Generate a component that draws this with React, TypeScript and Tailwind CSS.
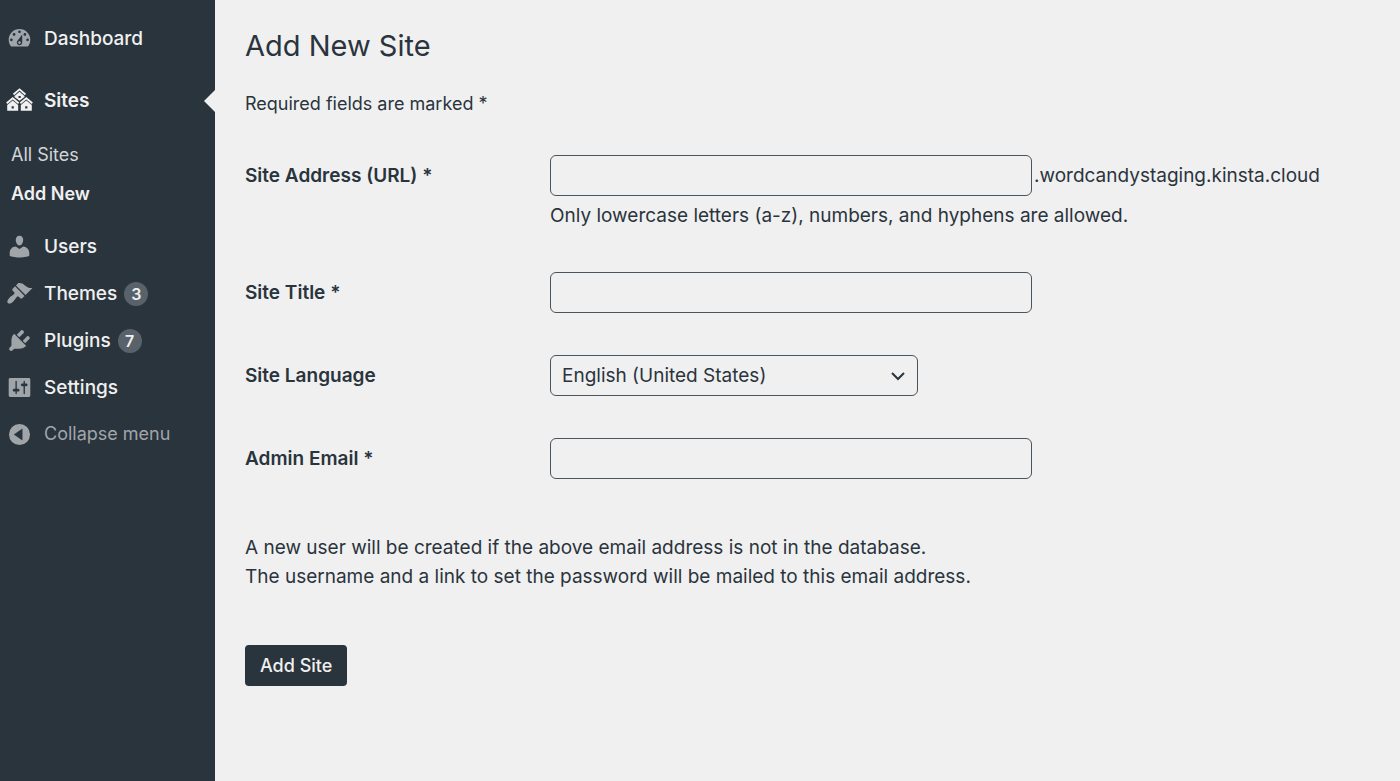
import type { ReactNode } from "react";

const icons = {
  dashboard:
    "M3.76 16h12.48c1.1-1.37 1.76-3.11 1.76-5 0-4.42-3.58-8-8-8s-8 3.58-8 8c0 1.89.66 3.63 1.76 5zM10 4c.55 0 1 .45 1 1s-.45 1-1 1-1-.45-1-1 .45-1 1-1zM6 6c.55 0 1 .45 1 1s-.45 1-1 1-1-.45-1-1 .45-1 1-1zm8 0c.55 0 1 .45 1 1s-.45 1-1 1-1-.45-1-1 .45-1 1-1zm-5.37 5.55L12 7v6c0 1.1-.9 2-2 2s-2-.9-2-2c0-.57.24-1.08.63-1.45zM4 10c.55 0 1 .45 1 1s-.45 1-1 1-1-.45-1-1 .45-1 1-1zm12 0c.55 0 1 .45 1 1s-.45 1-1 1-1-.45-1-1 .45-1 1-1zm-5 3c0-.55-.45-1-1-1s-1 .45-1 1 .45 1 1 1 1-.45 1-1z",
  users:
    "M10 9.25c-2.27 0-2.73-3.44-2.73-3.44C7 4.02 7.82 2 9.97 2c2.16 0 2.98 2.02 2.71 3.81 0 0-.41 3.44-2.68 3.44zm0 2.57L12.72 10c2.39 0 4.52 2.33 4.52 4.53v2.49s-3.65 1.13-7.24 1.13c-3.65 0-7.24-1.13-7.24-1.13v-2.49c0-2.25 1.94-4.48 4.47-4.48z",
  themes:
    "M14.48 11.06L7.41 3.99l1.5-1.5c.5-.56 2.3-.47 3.51.32 1.21.8 1.43 1.28 2.91 2.1 1.18.64 2.45 1.26 4.45.85zm-.71.71L6.7 4.7 4.93 6.47c-.39.39-.39 1.02 0 1.41l1.06 1.06c.39.39.39 1.03 0 1.42-.6.6-1.43 1.11-2.21 1.69-.35.26-.7.53-1.01.84C1.43 14.23.4 16.08 1.4 17.07c.99 1 2.84-.03 4.18-1.36.31-.31.58-.66.85-1.02.57-.78 1.08-1.61 1.69-2.21.39-.39 1.02-.39 1.41 0l1.06 1.06c.39.39 1.02.39 1.41 0z",
  plugins:
    "M13.11 4.36L9.87 7.6 8 5.73l3.24-3.24c.35-.34 1.05-.2 1.56.32.52.51.66 1.21.31 1.55zm-8 1.77l.91-1.12 9.01 9.01-1.19.84c-.71.71-2.63 1.16-3.82 1.16H6.14L4.9 17.26c-.59.59-1.54.59-2.12 0-.59-.58-.59-1.53 0-2.12l1.24-1.24v-3.88c0-1.13.4-3.19 1.09-3.89zm7.26 3.97l3.24-3.24c.34-.35 1.04-.21 1.55.31.52.51.66 1.21.31 1.55l-3.24 3.25z",
  settings:
    "M18 16V4c0-.55-.45-1-1-1H3c-.55 0-1 .45-1 1v12c0 .55.45 1 1 1h14c.55 0 1-.45 1-1zM8 11h1c.55 0 1 .45 1 1s-.45 1-1 1H8v1.5c0 .28-.22.5-.5.5s-.5-.22-.5-.5V13H6c-.55 0-1-.45-1-1s.45-1 1-1h1V5.5c0-.28.22-.5.5-.5s.5.22.5.5V11zm5-2h-1c-.55 0-1-.45-1-1s.45-1 1-1h1V5.5c0-.28.22-.5.5-.5s.5.22.5.5V7h1c.55 0 1 .45 1 1s-.45 1-1 1h-1v5.5c0 .28-.22.5-.5.5s-.5-.22-.5-.5V9z",
  collapse:
    "M10 2.2a7.8 7.8 0 1 0 0 15.6 7.8 7.8 0 0 0 0-15.6zM12.2 5.6v8.8L5.8 10z",
};

function Icon({ name }: { name: keyof typeof icons }) {
  return (
    <svg
      viewBox="0 0 20 20"
      fill="currentColor"
      fillRule="evenodd"
      aria-hidden="true"
      className="size-[27px] shrink-0 text-[#a0a5aa]"
    >
      <path d={icons[name]} />
    </svg>
  );
}

function SitesIcon() {
  return (
    <svg
      viewBox="0 0 27 27"
      fill="currentColor"
      fillRule="evenodd"
      aria-hidden="true"
      className="size-[27px] shrink-0 text-[#f0f0f0]"
    >
      <path d="M13.5 1.2l6.6 5.6-1.3 1.4-5.3-4.6-5.3 4.6-1.3-1.4z" />
      <path d="M13.5 4.8l5 4.3v.8l-5 3.9-5-3.9v-.8zM12.5 9v2.1h2.2V9z" />
      <path d="M6.7 10l6.6 5.6-1.3 1.4-5.3-4.6-5.3 4.6-1.3-1.4z" />
      <path d="M6.7 13.4l5.5 4.7v5.7h-11v-5.7zM5.6 19.2v2.2h2.2v-2.2z" />
      <path d="M20.3 10l6.6 5.6-1.3 1.4-5.3-4.6-5.3 4.6-1.3-1.4z" />
      <path d="M20.3 13.4l5.5 4.7v5.7h-11v-5.7zM19.2 19.2v2.2h2.2v-2.2z" />
    </svg>
  );
}

function MenuItem({ icon, label, count }: { icon: keyof typeof icons; label: string; count?: number }) {
  return (
    <li>
      <a href="#" className="flex h-[47px] items-center gap-[11px] px-1.5 text-[19px] font-medium">
        <Icon name={icon} />
        <span className="flex items-center gap-[7px]">
          <span className="pt-0.5">{label}</span>
          {count !== undefined && (
            <span className="flex size-6 items-center justify-center rounded-full bg-[#59626a] text-base font-semibold">
              {count}
            </span>
          )}
        </span>
      </a>
    </li>
  );
}

function Row({ id, label, children }: { id: string; label: string; children: ReactNode }) {
  return (
    <div className="flex">
      <label htmlFor={id} className="flex h-[41px] w-[305px] shrink-0 items-center pt-0.5 font-semibold">
        {label}
      </label>
      <div className="min-w-0 flex-1">{children}</div>
    </div>
  );
}

const field = "block h-[41px] w-[482px] max-w-full rounded-md border border-[#4a545d] bg-transparent px-3";

export default function App() {
  return (
    <div className="flex min-h-screen bg-[#f0f0f0] font-['Inter',sans-serif] text-[19px] text-[#2a343d]">
      <nav aria-label="Admin menu" className="w-[215px] shrink-0 bg-[#2a343d] pt-[15px] text-[#f0f0f0]">
        <ul>
          <MenuItem icon="dashboard" label="Dashboard" />
          <li className="pt-[15px]">
            <a href="#" className="relative flex h-[47px] items-center gap-[11px] px-1.5 font-semibold">
              <SitesIcon />
              <span className="pt-0.5">Sites</span>
              <svg
                viewBox="0 0 11 22"
                aria-hidden="true"
                className="absolute top-1/2 right-0 h-[22px] w-[11px] -translate-y-1/2 text-[#f0f0f0]"
              >
                <path d="M11 0v22L0 11z" fill="currentColor" />
              </svg>
            </a>
            <ul className="pt-[11px] pb-2.5 text-lg">
              <li>
                <a href="#" className="flex h-[39px] items-center px-[11px] text-[#d3d6d8]">
                  All Sites
                </a>
              </li>
              <li>
                <a href="#" aria-current="page" className="flex h-[39px] items-center px-[11px] font-semibold">
                  Add New
                </a>
              </li>
            </ul>
          </li>
          <MenuItem icon="users" label="Users" />
          <MenuItem icon="themes" label="Themes" count={3} />
          <MenuItem icon="plugins" label="Plugins" count={7} />
          <MenuItem icon="settings" label="Settings" />
        </ul>
        <button type="button" className="flex h-[46px] w-full items-center gap-[11px] px-1.5 text-lg text-[#a0a5aa]">
          <Icon name="collapse" />
          <span>Collapse menu</span>
        </button>
      </nav>

      <main className="min-w-0 flex-1 px-[30px] pt-[26px] pb-10">
        <h1 className="text-[29px] leading-10">Add New Site</h1>
        <p className="mt-6 text-lg leading-7">Required fields are marked *</p>

        <form className="mt-[37px]">
          <div className="flex flex-col gap-[42px]">
            <Row id="address" label="Site Address (URL) *">
              <div className="flex items-center gap-0.5">
                <input id="address" type="text" required className={field} />
                <span className="pt-0.5">.wordcandystaging.kinsta.cloud</span>
              </div>
              <p className="mt-1.5 leading-7">
                Only lowercase letters (a-z), numbers, and hyphens are allowed.
              </p>
            </Row>
            <Row id="title" label="Site Title *">
              <input id="title" type="text" required className={field} />
            </Row>
            <Row id="language" label="Site Language">
              <div className="relative w-[368px] max-w-full">
                <select
                  id="language"
                  className="block h-[41px] w-full appearance-none rounded-md border border-[#4a545d] bg-transparent px-[11px] pt-0.5"
                >
                  <option>English (United States)</option>
                </select>
                <svg
                  viewBox="0 0 20 20"
                  fill="none"
                  stroke="currentColor"
                  strokeWidth="2"
                  aria-hidden="true"
                  className="pointer-events-none absolute top-1/2 right-2.5 size-5 -translate-y-1/2"
                >
                  <path d="M4 7l6 6 6-6" />
                </svg>
              </div>
            </Row>
            <Row id="email" label="Admin Email *">
              <input id="email" type="email" required className={field} />
            </Row>
          </div>

          <p className="mt-[54px] leading-[29px]">
            A new user will be created if the above email address is not in the database.
            <br />
            The username and a link to set the password will be mailed to this email address.
          </p>

          <button
            type="submit"
            className="mt-[54px] h-[41px] rounded bg-[#2a343d] px-[15px] text-lg font-medium text-[#f0f0f0]"
          >
            Add Site
          </button>
        </form>
      </main>
    </div>
  );
}
